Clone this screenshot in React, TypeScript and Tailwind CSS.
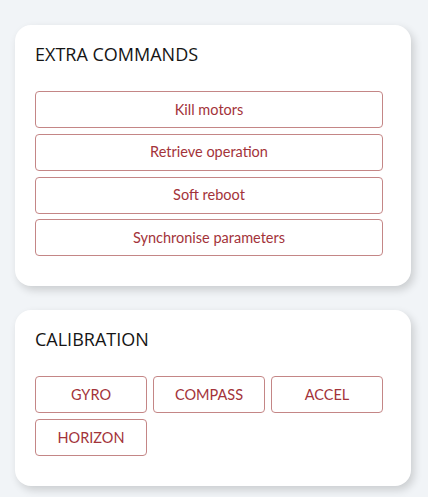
const commands = ["Kill motors", "Retrieve operation", "Soft reboot", "Synchronise parameters"]
const calibrations = ["GYRO", "COMPASS", "ACCEL", "HORIZON"]

function Card({ title, children }: { title: string; children: React.ReactNode }) {
  return (
    <div className="w-[396px] bg-white rounded-[16px] shadow-[3px_4px_8px_rgba(0,0,0,0.16)] pl-[20px] pr-[28px] pt-[17px] pb-[30px]">
      <h2 className="font-['Open_Sans',sans-serif] text-[18px] leading-6 font-medium text-[#151515] mb-[25px]">
        {title}
      </h2>
      {children}
    </div>
  )
}

export default function App() {
  return (
    <div className="min-h-[497px] bg-[#f1f4f7] px-[15px] pt-[25px] pb-[10px] flex flex-col gap-[24px]">
      {/* Extra commands */}
      <Card title="EXTRA COMMANDS">
        <div className="flex flex-col gap-[5.8px]">
          {commands.map((c) => (
            <button
              key={c}
              className="h-[37px] w-full border border-[#c48686] rounded-[4px] bg-white text-[#a3333a] font-['Lato',sans-serif] text-[14.5px]"
            >
              {c}
            </button>
          ))}
        </div>
      </Card>

      {/* Calibration */}
      <Card title="CALIBRATION">
        <div className="grid grid-cols-3 gap-[6px]">
          {calibrations.map((c) => (
            <button
              key={c}
              className="h-[37px] border border-[#c48686] rounded-[4px] bg-white text-[#a3333a] font-['Lato',sans-serif] text-[14.5px]"
            >
              {c}
            </button>
          ))}
        </div>
      </Card>
    </div>
  )
}
